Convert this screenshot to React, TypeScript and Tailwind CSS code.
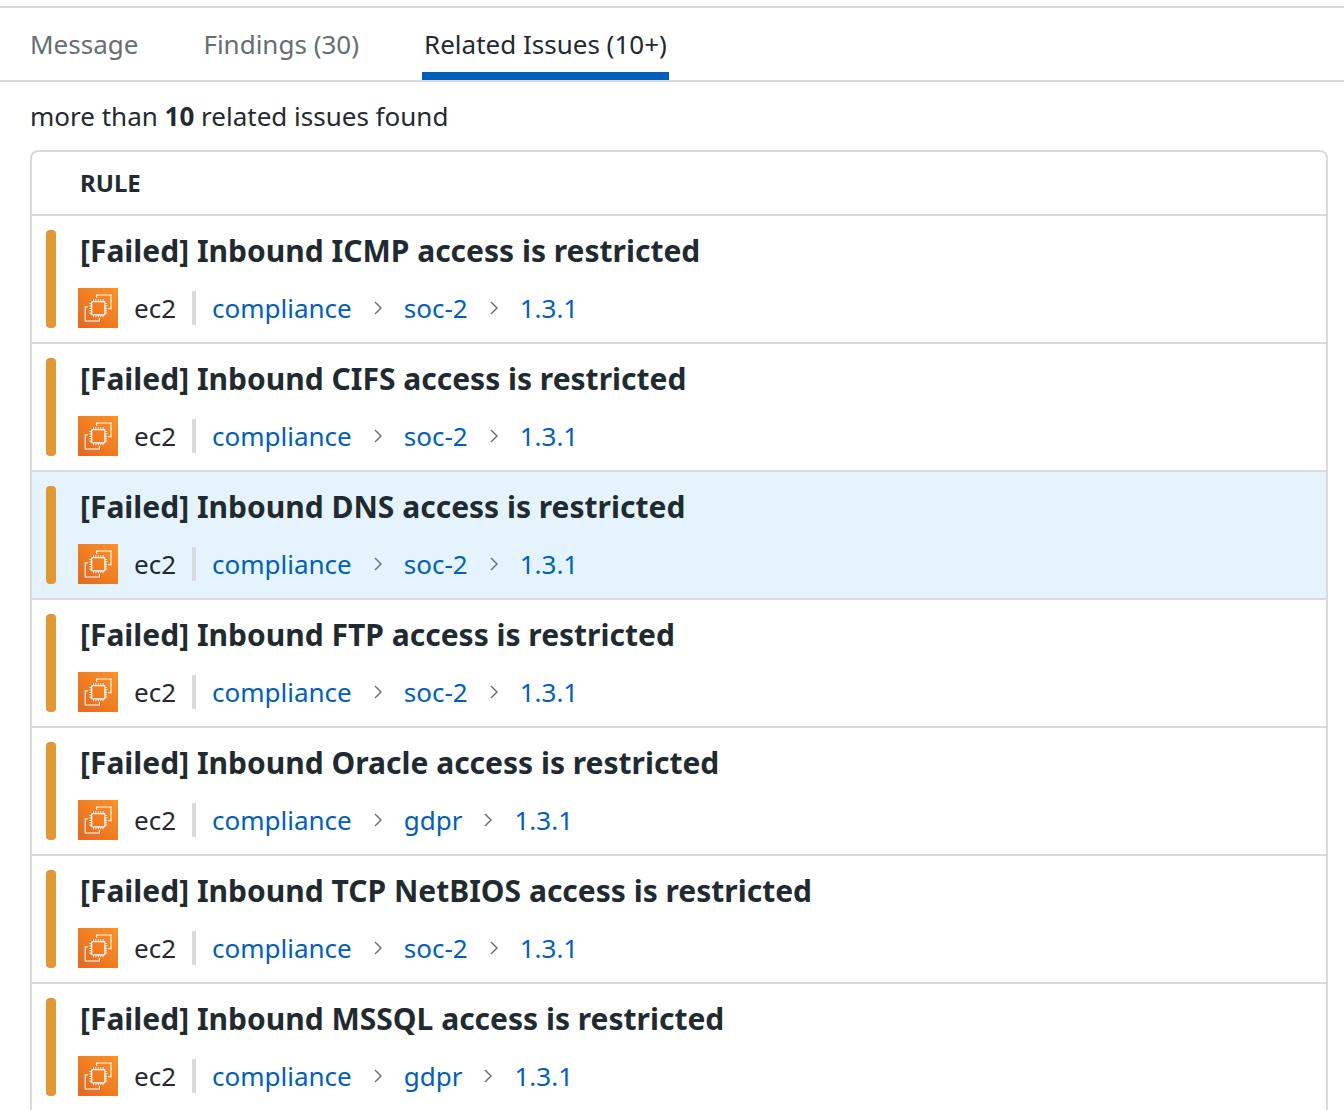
import React from "react";

type Issue = { title: string; framework: string; control: string; active?: boolean };

const issues: Issue[] = [
  { title: "[Failed] Inbound ICMP access is restricted", framework: "soc-2", control: "1.3.1" },
  { title: "[Failed] Inbound CIFS access is restricted", framework: "soc-2", control: "1.3.1" },
  { title: "[Failed] Inbound DNS access is restricted", framework: "soc-2", control: "1.3.1", active: true },
  { title: "[Failed] Inbound FTP access is restricted", framework: "soc-2", control: "1.3.1" },
  { title: "[Failed] Inbound Oracle access is restricted", framework: "gdpr", control: "1.3.1" },
  { title: "[Failed] Inbound TCP NetBIOS access is restricted", framework: "soc-2", control: "1.3.1" },
  { title: "[Failed] Inbound MSSQL access is restricted", framework: "gdpr", control: "1.3.1" },
];

const tabs = [
  { label: "Message", selected: false },
  { label: "Findings (30)", selected: false },
  { label: "Related Issues (10+)", selected: true },
];

function Ec2Icon() {
  return (
    <svg viewBox="0 0 40 40" className="size-10 shrink-0" aria-hidden="true">
      <defs>
        <linearGradient id="ec2-fill" x1="0" y1="1" x2="1" y2="0">
          <stop offset="0" stopColor="#e06a22" />
          <stop offset="1" stopColor="#ff9124" />
        </linearGradient>
      </defs>
      <rect width="40" height="40" fill="url(#ec2-fill)" />
      <g fill="none" stroke="#fff" strokeWidth="1.1">
        <rect x="13.7" y="13.7" width="13.2" height="13.2" rx="0.8" strokeWidth="1.3" />
        <path d="M18.7 10V7H33v13.8h-2.9M10 18.9H7.2V33h14.2v-2.9" />
        <path d="M15.5 11.3v2.4M17.9 11.3v2.4M20.3 11.3v2.4M22.7 11.3v2.4M25.1 11.3v2.4M15.5 26.9v2.4M17.9 26.9v2.4M20.3 26.9v2.4M22.7 26.9v2.4M25.1 26.9v2.4M11.3 15.5h2.4M11.3 17.9h2.4M11.3 20.3h2.4M11.3 22.7h2.4M11.3 25.1h2.4M26.9 15.5h2.4M26.9 17.9h2.4M26.9 20.3h2.4M26.9 22.7h2.4M26.9 25.1h2.4" strokeWidth="0.9" />
      </g>
    </svg>
  );
}

function Chevron() {
  return (
    <svg viewBox="0 0 8 14" className="mx-[22px] h-3.5 w-2 shrink-0" fill="none" stroke="#6c7378" strokeWidth="1.5" aria-hidden="true">
      <path d="M1 1l6 6-6 6" />
    </svg>
  );
}

function IssueRow({ issue }: { issue: Issue }) {
  return (
    <tr className={issue.active ? "group bg-[#e5f4fc]" : "group"}>
      <td className="border-b-2 border-[#d9d9df] p-0 group-last:border-b-0">
        <div className="flex px-3.5 py-3.5">
          <span className="w-2.5 shrink-0 rounded-[4px] bg-[#e19733]" />
          <div className="ml-[22px] min-w-0">
            <h3 className="mb-4 px-0.5 text-[30px] leading-[42px] font-bold">{issue.title}</h3>
            <div className="flex h-10 items-center">
              <Ec2Icon />
              <span className="ml-4">ec2</span>
              <span className="mx-4 h-[34px] w-1 bg-[#d9d9df]" />
              <a href="#compliance" className="text-[#0060b8]">compliance</a>
              <Chevron />
              <a href="#framework" className="text-[#0060b8]">{issue.framework}</a>
              <Chevron />
              <a href="#control" className="text-[#0060b8]">{issue.control}</a>
            </div>
          </div>
        </div>
      </td>
    </tr>
  );
}

export default function App() {
  return (
    <main className="bg-white pt-1.5 font-['Noto_Sans',sans-serif] text-[26px] leading-10 text-[#1f2b31]">
      <div role="tablist" className="flex gap-[61px] border-y-2 border-[#d9d9df] px-7">
        {tabs.map((tab) => (
          <button
            key={tab.label}
            type="button"
            role="tab"
            aria-selected={tab.selected}
            className={
              tab.selected
                ? "border-b-8 border-[#0060b8] px-0.5 pt-4 pb-2"
                : "border-b-8 border-transparent px-0.5 pt-4 pb-2 text-[#666e73]"
            }
          >
            {tab.label}
          </button>
        ))}
      </div>
      <section className="pt-3.5 pr-4 pl-[30px]">
        <p className="mb-3.5">
          more than <strong className="font-bold">10</strong> related issues found
        </p>
        <div className="overflow-hidden rounded-t-lg border-2 border-b-0 border-[#d9d9df]">
          <table className="w-full border-separate border-spacing-0">
            <thead>
              <tr>
                <th scope="col" className="h-16 border-b-2 border-[#d9d9df] p-0 pl-12 text-left text-2xl font-bold">
                  RULE
                </th>
              </tr>
            </thead>
            <tbody>
              {issues.map((issue) => (
                <IssueRow key={issue.title} issue={issue} />
              ))}
            </tbody>
          </table>
        </div>
      </section>
    </main>
  );
}
